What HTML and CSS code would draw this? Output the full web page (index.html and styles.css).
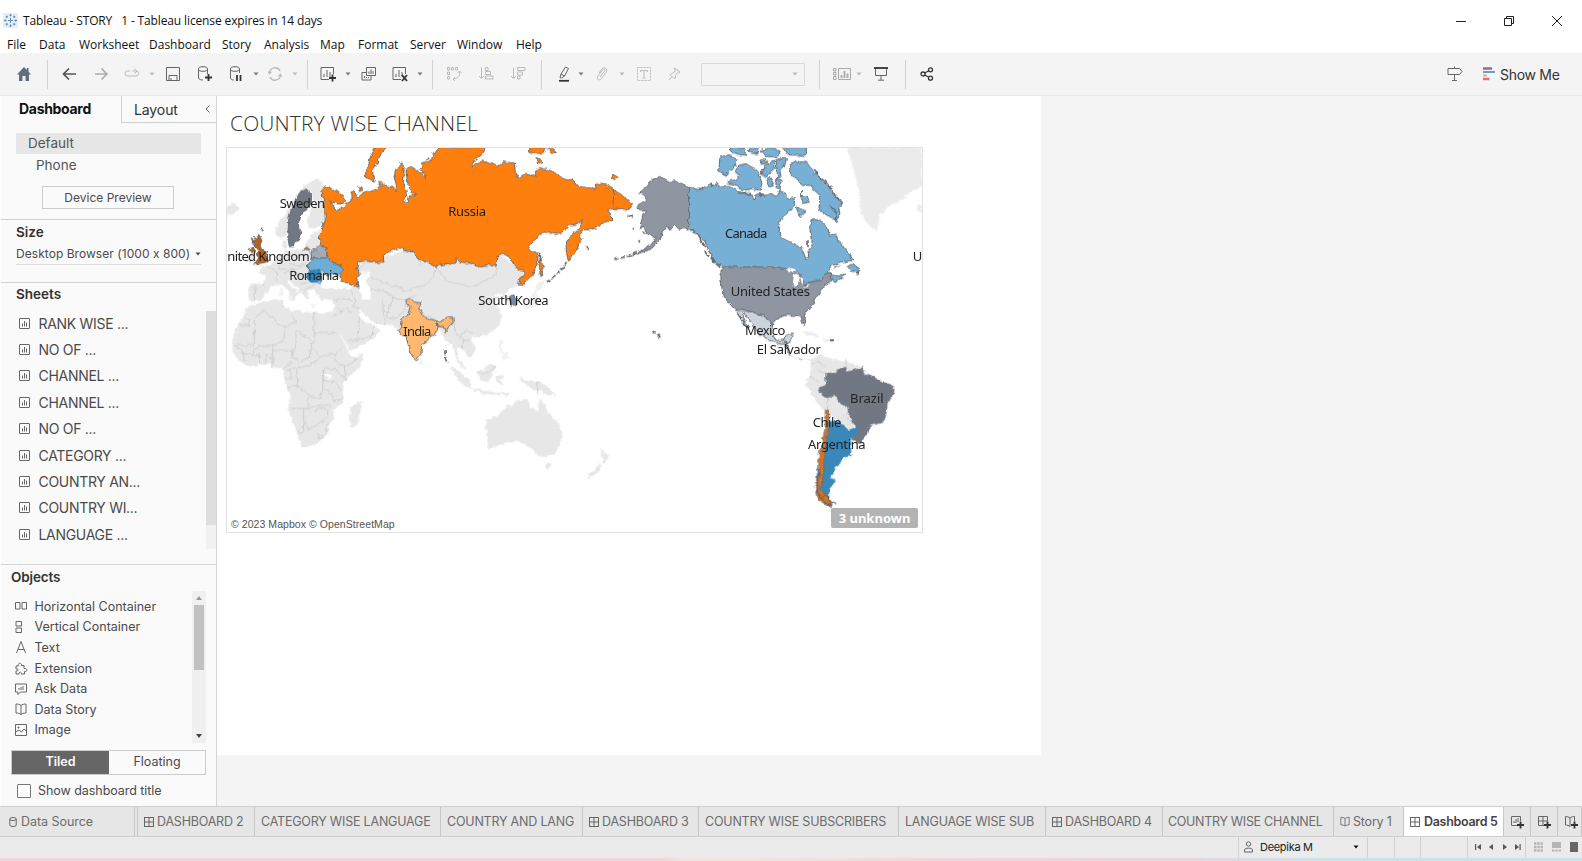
FILE: index.html
```html
<!DOCTYPE html>
<html lang="en">
<head>
<meta charset="utf-8">
<title>Tableau - STORY 1</title>
<link rel="stylesheet" href="styles.css">
</head>
<body>
<svg class="defs" width="0" height="0" aria-hidden="true">
  <symbol id="caret" viewBox="0 0 6 4"><path d="M.5 .5H5.5L3 3.5Z" fill="currentColor"/></symbol>
  <symbol id="sheet" viewBox="0 0 11 11"><rect x=".5" y=".5" width="10" height="10" rx=".5"/><path d="M3.5 8.500V5.500M5.500 8.500V3M7.500 8.500V4.500"/></symbol>
  <symbol id="dash" viewBox="0 0 10 10"><rect x=".5" y=".5" width="9" height="9"/><path d="M5 .5V9.500M.5 5H9.500"/></symbol>
  <symbol id="book" viewBox="0 0 12 12"><path d="M6 2.500C5 1.500 3 1 1 1V10C3 10 5 10.500 6 11.500C7 10.500 9 10 11 10V1C9 1 7 1.500 6 2.500V11.500"/></symbol>
</svg>
<div class="app">
  <header class="titlebar">
    <svg class="logo" width="15" height="15" viewBox="0 0 15 15"><path d="M0 0H15V15H0Z" fill="#e9eef2"/><path d="M7.500 5V10M5 7.500H10M7.500 1V3.500M6.300 2.200H8.700M7.500 11.500V14M6.300 12.800H8.700M1 7.500H3.500M2.200 6.300V8.700M11.500 7.500H14M12.800 6.300V8.700M3.800 2.500V5M2.600 3.800H5M11.200 2.500V5M10 3.800H12.400M3.800 10V12.500M2.600 11.200H5M11.200 10V12.500M10 11.200H12.400" stroke="#5b93b8"/></svg>
    <span class="apptitle">Tableau - STORY &nbsp; 1 - Tableau license expires in 14 days</span>
    <svg class="winbtn" width="10" height="10" viewBox="0 0 10 10"><path d="M0 5.500H10"/></svg>
    <svg class="winbtn" width="10" height="10" viewBox="0 0 10 10"><path d="M.5 2.500H7.500V9.500H.5ZM2.500 2.500V.5H9.500V7.500H7.500"/></svg>
    <svg class="winbtn" width="10" height="10" viewBox="0 0 10 10"><path d="M0 0L10 10M10 0L0 10"/></svg>
  </header>
  <nav class="menubar"><span class="me1">File</span><span class="me2">Data</span><span class="me3">Worksheet</span><span class="me4">Dashboard</span><span class="me5">Story</span><span class="me6">Analysis</span><span class="me7">Map</span><span class="me8">Format</span><span class="me9">Server</span><span class="me10">Window</span><span>Help</span></nav>
  <div class="toolbar">
    <svg class="m16" width="16" height="16" viewBox="0 0 16 16"><path d="M8 1L1 8.500H3V15H6.500V10H9.500V15H13V8.500H15L12.500 5.800V2H10.800V4Z" fill="#5f6e80"/></svg>
    <i class="sep m15"></i>
    <svg class="m14 st b2" width="15" height="14" viewBox="0 0 15 14"><path d="M14 7H1.500M7 1.500L1.500 7L7 12.500"/></svg>
    <svg class="m17 st dim b3" width="15" height="14" viewBox="0 0 15 14"><path d="M1 7H13M7.500 1.500L13 7L7.500 12.500"/></svg>
    <svg class="m15 st dim" width="16" height="14" viewBox="0 0 16 14"><path d="M6 4H3.500Q1 4 1 6.500T3.500 9H12Q14.500 9 14.500 6.500T12 4H8.500M10.500 1.500L13 4L10.500 6.500"/></svg>
    <svg class="m9 dim" width="6" height="4"><use href="#caret"/></svg>
    <svg class="m11 st" width="14" height="14" viewBox="0 0 14 14"><path d="M.5 .5H13.500V13.500H.5ZM3 13.500V8.500H11V13.500M5 13V11"/></svg>
    <svg class="m18 st" width="14" height="16" viewBox="0 0 14 16"><ellipse cx="5" cy="3" rx="4.500" ry="2.300"/><path d="M.5 3V12C1 13.500 3 14 5 14M9.500 3V8"/><path d="M7 11.500H14M10.500 8V15" class="bold"/></svg>
    <svg class="m18 st" width="14" height="16" viewBox="0 0 14 16"><ellipse cx="5" cy="3" rx="4.500" ry="2.300"/><path d="M.5 3V12C1 13.500 2 14 4 14M9.500 3V7"/><path d="M7 9V15M10.500 9V15" class="bold"/></svg>
    <svg class="m9" width="6" height="4"><use href="#caret"/></svg>
    <svg class="m9 st dim b4" width="14" height="14" viewBox="0 0 14 14"><path d="M1.500 6C2 0 10 -1 12 4M12.500 8C12 14 4 15 2 10M0 4.500L1.500 6.500L3.500 5M10.500 9L12.500 7.500L14 9.500"/></svg>
    <svg class="m10 dim" width="6" height="4"><use href="#caret"/></svg>
    <i class="sep m9"></i>
    <svg class="m12 st" width="17" height="16" viewBox="0 0 17 16"><path d="M9 13.500H1V1.500H13.500V8M4 11V8M7 11V4M10 11V6"/><path d="M9 12H16M12.500 8.500V15.500" class="bold"/></svg>
    <svg class="m8" width="6" height="4"><use href="#caret"/></svg>
    <svg class="m10 st" width="16" height="16" viewBox="0 0 16 16"><path d="M5.500 9.500H14.500V1.500H5.500ZM8 8V5.500M10 8V3.500M12 8V5M10 9.500V14H1V6.500H5.500M3.500 12V10M5.500 12V11M7.500 12V11"/></svg>
    <svg class="m15 st" width="17" height="16" viewBox="0 0 17 16"><path d="M9 13.500H1V1.500H13.500V8M4 11V8M7 11V4M10 11V6"/><path d="M10 9L15 15M15 9L10 15" class="bold"/></svg>
    <svg class="m8" width="6" height="4"><use href="#caret"/></svg>
    <i class="sep m9"></i>
    <svg class="m13 st dim" width="16" height="16" viewBox="0 0 16 16"><path d="M1.500 1.500H3.500V4H1.500ZM5.500 1.500H7.500V4H5.500ZM9.500 1.500H11.500V4H9.500ZM1.500 6H3.500V8.500H1.500ZM1.500 10.500H3.500V13H1.500ZM13.500 5.500C14.500 10 12 12.500 7 13M11.500 7L13.500 5L15.500 7M9 11L7 13L9 15"/></svg>
    <svg class="m16b st dim" width="16" height="16" viewBox="0 0 16 16"><path d="M3.500 1.500V12.500M1 10L3.500 12.500L6 10M7.500 1.500H10V4.500H7.500ZM7.500 5.500H12.500V8.500H7.500ZM7.500 10H15V13H7.500Z"/></svg>
    <svg class="m16b st dim" width="16" height="16" viewBox="0 0 16 16"><path d="M3.500 1.500V12.500M1 10L3.500 12.500L6 10M7.500 1.500H15V4.500H7.500ZM7.500 6H12.500V9H7.500ZM7.500 10H10V13H7.500Z"/></svg>
    <i class="sep m15"></i>
    <svg class="m16b st" width="12" height="16" viewBox="0 0 12 16"><path d="M2 11.500L3 8L7.500 1L10.500 2.500L6.500 10L3.500 12ZM3 8L6.500 10"/><path d="M1 14.800H11" class="bold"/></svg>
    <svg class="m8" width="6" height="4"><use href="#caret"/></svg>
    <svg class="m12 st dim" width="12" height="14" viewBox="0 0 12 14"><path d="M4 10L8.500 4C9.500 2.500 7.500 1.500 6.500 3L2 9C0 12 3 14.500 5.500 11.500L10 5.500C12.500 2 8.500 -1 6 2L3 6"/></svg>
    <svg class="m11 dim" width="6" height="4"><use href="#caret"/></svg>
    <svg class="m12 st dim" width="14" height="14" viewBox="0 0 14 14"><path d="M.5 .5H13.500V13.500H.5Z" stroke-dasharray="2 1"/><path d="M3.500 5V3.500H10.500V5M7 3.500V11M5.500 11H8.500"/></svg>
    <svg class="m17 st dim" width="13" height="14" viewBox="0 0 13 14"><path d="M6.500 1L12 5L10.500 6L9.500 5.800L7.500 8.500V11L6 11.500L2 7.500L3 6.500L5.500 6L7.300 3.500ZM4 9.500L1 13"/></svg>
    <div class="picker m20"><svg class="dim" width="6" height="4"><use href="#caret"/></svg></div>
    <i class="sep m14"></i>
    <svg class="m13 st mid" width="18" height="14" viewBox="0 0 18 14"><path d="M5.500 1.500H17.500V12.500H5.500ZM.5 1.500H3V4H.5ZM.5 5.500H3V8H.5ZM.5 9.500H3V12.500H.5Z"/><path d="M8.500 11V8M11.500 11V4M14.500 11V6.500" stroke-width="1.800"/></svg>
    <svg class="m5 dim" width="6" height="4"><use href="#caret"/></svg>
    <svg class="m11 st" width="16" height="16" viewBox="0 0 16 16"><path d="M2.500 2V9.500H13.500V2M8 9.500V14M5 14.200H11"/><path d="M1 2H15" class="bold"/></svg>
    <i class="sep m16b"></i>
    <svg class="m14 st dark" width="14" height="14" viewBox="0 0 14 14"><circle cx="3" cy="7" r="2"/><circle cx="10.500" cy="2.800" r="2"/><circle cx="10.500" cy="11.200" r="2"/><path d="M4.800 6L8.700 3.800M4.800 8L8.700 10.200"/></svg>
    <svg class="guide st" width="16" height="16" viewBox="0 0 16 16"><path d="M1 2.500H12.500L15 5.500L12.500 8.500H1ZM7.500 .5V2.500M7.500 8.500V14M5 14.500H10"/></svg>
    <svg class="m20" width="12" height="14" viewBox="0 0 12 14"><path d="M0 1.500H9" stroke="#8a6d98" stroke-width="2.500"/><path d="M0 5H12" stroke="#6d9dc8" stroke-width="2"/><path d="M0 8.500H4" stroke="#f0a48c" stroke-width="2"/><path d="M0 12H6.500" stroke="#e96f76" stroke-width="2.500"/></svg>
    <span class="showme">Show Me</span>
  </div>

  <div class="workspace">
    <aside class="side">
      <div class="sidetabs"><b>Dashboard</b><div class="layouttab"><span>Layout</span><svg class="st" width="5" height="8" viewBox="0 0 5 8"><path d="M4.500 .5L1 4L4.500 7.500"/></svg></div></div>
      <div class="devices">
        <div class="default">Default</div>
        <div class="phone">Phone</div>
        <div class="preview">Device Preview</div>
      </div>
      <div class="size"><h3>Size</h3><div class="sizepick"><span>Desktop Browser (1000 x 800)</span><svg width="6" height="4"><use href="#caret"/></svg></div></div>
      <div class="sheets">
        <div class="sheetcol">
          <h3>Sheets</h3>
          <ul>
            <li><svg class="st" width="11" height="11"><use href="#sheet"/></svg>RANK WISE ...</li>
            <li><svg class="st" width="11" height="11"><use href="#sheet"/></svg>NO OF ...</li>
            <li><svg class="st" width="11" height="11"><use href="#sheet"/></svg>CHANNEL ...</li>
            <li><svg class="st" width="11" height="11"><use href="#sheet"/></svg>CHANNEL ...</li>
            <li><svg class="st" width="11" height="11"><use href="#sheet"/></svg>NO OF ...</li>
            <li><svg class="st" width="11" height="11"><use href="#sheet"/></svg>CATEGORY ...</li>
            <li><svg class="st" width="11" height="11"><use href="#sheet"/></svg>COUNTRY AN...</li>
            <li><svg class="st" width="11" height="11"><use href="#sheet"/></svg>COUNTRY WI...</li>
            <li><svg class="st" width="11" height="11"><use href="#sheet"/></svg>LANGUAGE ...</li>
          </ul>
        </div>
        <div class="scroll1"><div></div></div>
      </div>
      <div class="objects">
        <h3>Objects</h3>
        <div class="objrow">
          <ul>
            <li><svg class="st" width="12" height="12" viewBox="0 0 12 12"><path d="M.5 2.500H5V9H.5ZM7 2.500H11.500V9H7Z"/></svg>Horizontal Container</li>
            <li><svg class="st" width="12" height="14" viewBox="0 0 12 14"><path d="M1 1.500H6.500V6H1ZM1 8H6.500V12.500H1Z"/></svg>Vertical Container</li>
            <li><svg class="st" width="12" height="14" viewBox="0 0 12 14"><path d="M1.500 13L6 1.500L10.500 13M3 9.500H9"/></svg>Text</li>
            <li><svg class="st" width="13" height="13" viewBox="0 0 13 13"><path d="M1 4H3.500C2 1 7 0 6.500 3.500H9V6.500C12.500 6 13 10 9.500 9.500V12H6.500C6.500 9.500 4 9.500 4 12H1V9C4 9 4 6.500 1 7Z"/></svg>Extension</li>
            <li><svg class="st" width="12" height="12" viewBox="0 0 12 12"><path d="M.5 1H11.500V9H5.500L3 11.500V9H.5ZM4 7V5M6 7V4M8 7V3"/></svg>Ask Data</li>
            <li><svg class="st" width="12" height="12"><use href="#book"/></svg>Data Story</li>
            <li><svg class="st" width="12" height="12" viewBox="0 0 12 12"><path d="M.5 .5H11.500V11.500H.5ZM.5 8L4 6L6.500 8L9 5L11.500 7M3 3H4V4H3Z"/></svg>Image</li>
          </ul>
          <div class="scroll2"><svg width="6" height="4" viewBox="0 0 6 4"><path d="M0 4H6L3 0Z" fill="#999"/></svg><div></div><svg width="6" height="4" viewBox="0 0 6 4"><path d="M0 0H6L3 4Z" fill="#444"/></svg></div>
        </div>
        <div class="segment"><b>Tiled</b><span>Floating</span></div>
        <label class="check"><i></i>Show dashboard title</label>
      </div>
    </aside>

    <main class="canvas">
      <h1>COUNTRY WISE CHANNEL</h1>
      <div class="mapframe">
        <svg width="695" height="384" viewBox="23 23 2085 1152">
          <defs>
            <filter id="coast" filterUnits="userSpaceOnUse" x="0" y="0" width="2130" height="1200" color-interpolation-filters="sRGB">
              <feTurbulence type="fractalNoise" baseFrequency=".07" numOctaves="2" seed="4" result="n"/>
              <feDisplacementMap in="SourceGraphic" in2="n" scale="14" xChannelSelector="R" yChannelSelector="G" result="d"/>
              <feGaussianBlur in="d" stdDeviation="1"/>
            </filter>
          </defs>
          <g filter="url(#coast)">
          <!-- base land -->
          <g class="land">
            <path d="M128 384L120 376 148 376 168 365 185 345 192 328 215 332 250 328 262 320 300 330 400 380 560 330 620 360 800 360 840 340 915 400 918 412 900 428 888 438 870 446 855 462 880 475 888 492 875 500 862 480 848 462 832 456 820 465 838 470 826 484 832 496 842 515 845 535 838 555 820 572 800 585 775 588 760 585 755 600 768 620 766 640 752 652 738 638 722 620 712 625 715 650 728 668 740 688 728 680 712 655 706 630 700 610 690 612 672 590 668 575 660 560 650 580 605 620 606 645 590 660 580 650 568 620 558 585 545 580 535 570 525 556 500 552 470 548 455 540 432 520 418 505 420 530 440 548 458 550 466 558 482 572 465 590 440 605 415 622 392 630 388 620 372 590 352 560 340 540 335 528 345 500 340 480 310 478 296 465 285 445 264 450 270 478 250 462 232 440 205 418 200 422 215 440 244 458 230 466 222 480 212 456 188 430 170 432 150 440 140 460 125 478 95 482 88 470 90 430 130 432 138 410 118 395Z"/>
            <path d="M168 278L172 262 182 240 205 215 215 190 232 165 250 140 280 122 300 118 312 135 302 150 278 150 260 146 240 170 218 205 208 250 208 272 195 290 178 290Z"/>
            <path d="M278 150L302 148 316 178 318 240 308 252 290 262 270 262 262 245 276 210 292 190 280 175ZM275 285L300 268 302 312 278 330 256 318 266 300ZM188 302H202V324H190ZM22 200L45 188 60 205 45 220 22 226ZM90 336L106 338 102 362 86 364Z"/>
            <path d="M208 465L225 470 222 480 208 476ZM183 445H190V466H182ZM270 492L290 496 282 500ZM952 430L975 420 965 445 948 455 960 480 945 500 915 505 905 500 930 490 940 470ZM838 600L848 600 846 625 856 640 848 640 838 622ZM850 645L865 635 868 655 852 660ZM600 655L612 660 608 672 600 670Z" opacity=".6"/>
          </g>
          <g class="land" transform="translate(0 450)">
            <path d="M40 183L40 140 55 105 72 85 78 60 92 48 115 40 150 32 185 28 192 50 215 62 240 58 255 70 262 64 300 70 335 68 345 90 358 120 372 152 388 185 400 205 430 190 432 205 410 240 385 262 372 275 370 310 372 335 340 360 345 385 330 400 325 425 300 455 275 468 250 470 240 450 235 428 215 380 207 355 215 320 205 290 192 262 192 235 165 230 150 220 120 220 95 230 60 212Z"/>
            <path d="M395 352L425 332 428 345 410 405 398 410 390 395ZM800 390L838 375 860 350 880 345 895 330 925 330 930 350 955 365 962 325 975 345 985 365 1010 390 1028 430 1020 465 1005 490 980 500 955 495 940 475 925 465 890 450 850 460 812 474 805 465 808 440 800 415ZM978 520L996 518 990 536 982 536ZM1145 475L1155 490 1170 495 1162 510 1150 520 1150 505ZM1145 518L1145 530 1125 555 1108 563 1106 552 1130 535Z"/>
            <path d="M900 262L930 275 955 270 980 285 1010 315 990 312 965 302 940 300 925 282 905 275ZM772 245L795 235 815 222 828 232 818 255 805 275 785 270ZM690 228L720 245 750 270 752 292 735 285 712 258ZM752 294L790 300 830 308 870 310 860 316 790 308ZM828 255L852 258 840 268 852 285 835 275Z"/>
          </g>
          <g class="land"><path d="M1885 22L2108 22 2108 140 2080 150 2050 175 2010 195 1980 225 1972 270 1955 262 1935 240 1922 200 1920 150 1910 110 1895 60ZM2095 190L2108 195V220L2098 212ZM1750 572L1780 578 1800 590 1770 585ZM1810 594L1840 596 1835 604 1815 602Z" opacity=".8"/>
            <path d="M1690 615L1712 622 1708 640 1730 655 1775 658 1800 645 1850 660 1880 665 1932 680 1930 720 1900 740 1900 870 1908 895 1900 915 1885 905 1880 860 1822 815 1800 795 1775 755 1757 735 1775 710 1775 670 1760 655 1740 660 1715 645Z"/>
          </g>
          <!-- inland water -->
          <g fill="#fff"><path d="M300 430L310 418 318 400 330 415 345 405 360 418 385 430 400 442 370 446 330 445 305 445ZM428 398L450 396 452 410 440 420 448 440 455 460 452 478 430 478 422 455 418 435 412 415ZM316 702L334 700 338 715 318 712Z"/></g>
          <!-- borders -->
          <g class="border">
            <path d="M415 385L440 365 490 365M455 410L490 425 510 435 540 440 560 455 590 440 620 435 640 410 650 378M455 445L490 450 520 470 550 480 590 465M490 475L492 520 500 552M395 452L410 480 400 500 420 508M345 480L370 478 400 480M520 470L515 490 500 530 530 535 555 510 560 480M340 530L380 505 400 515M352 500L370 515M420 530L415 605M466 558L455 590 388 602M130 432L138 438M92 440L110 435 105 482M148 380L175 395 172 425M185 345L178 385 230 388 262 370M210 370L240 375 270 372M192 398L225 390 225 410M230 405L262 412M240 430L262 426M250 460L262 445 290 430M595 505L620 525 655 540M650 380L680 420 750 440 790 425 830 405 832 376M700 545L705 575 720 590 750 605M720 590L740 570 760 580M735 595L725 620M600 350L605 375M650 378L700 372"/>
            <path transform="translate(0 450)" d="M72 85H92V105H60M132 60L105 85 105 165H45M132 60L195 112 230 95 218 75M192 50L190 30M284 65V155L230 120M284 128H352M195 112L195 145 170 165 130 165 105 175 100 195 60 185M45 165L70 185 75 210M100 195L120 192 125 220M140 190V218M155 188V220M160 165L160 230M160 180L220 180 215 215 195 235M230 120L230 160 220 200 240 215 270 200 275 155M284 155L275 165 300 200 350 190 370 170M300 205L280 220 225 235 200 240M350 190L345 210 375 230 415 210 400 200M375 230L378 265M315 235L345 235 378 265M315 235L310 270 345 275 370 300M232 235L235 285 265 310 300 330 310 295 312 240M205 290L235 285M265 310L267 355H210M310 295L335 310 345 335 372 322M267 355L300 345 335 345M253 355V425H235M258 385L265 420 300 400 325 380 325 360 300 350 285 365M325 400L320 425 332 415M295 440A7 7 0 1 0 309 436 7 7 0 1 0 295 440M955 270V312M772 245L800 248 828 232M195 265H215V235"/>
            <path d="M1775 670L1800 665 1815 680M1757 720L1775 710 1800 725M1825 770V815M1820 700L1800 690M1880 655V690M1870 820L1900 850"/>
          </g>
          <!-- filled countries -->
          <g class="filled">
            <path fill="#ff7f0e" d="M306 148L318 137 334 143 356 155 372 168 379 182 370 191 352 190 334 184 344 200 350 212 366 206 374 200 376 194 388 186 398 178 398 162 394 156 404 152 408 166 416 172 428 160 444 150 458 152 464 146 474 150 486 138 478 126 490 128 506 138 524 142 532 152 530 130 524 108 530 86 546 68 554 78 554 100 552 125 560 150 562 172 550 186 566 184 572 164 592 166 574 152 568 130 562 112 560 90 572 76 590 88 612 104 620 116 616 102 604 86 606 68 636 62 640 50 658 22 798 20 790 40 765 58 755 80 772 68 790 62 805 68 840 75 855 65 885 68 888 95 900 115 915 102 945 105 950 92 960 82 1000 92 1025 112 1040 118 1062 118 1068 135 1090 140 1130 145 1128 132 1160 132 1182 148 1210 165 1222 180 1240 190 1228 205 1222 212 1205 205 1182 205 1165 210 1175 222 1178 240 1150 248 1135 262 1110 268 1092 268 1080 280 1088 295 1078 310 1075 325 1060 345 1047 362 1042 340 1040 315 1048 292 1070 275 1080 262 1092 240 1078 245 1070 255 1050 252 1035 272 1010 282 990 278 962 280 945 300 928 322 940 335 955 335 956 360 950 385 935 410 915 432 898 432 902 412 918 400 912 390 898 388 885 375 870 350 855 342 840 342 834 360 830 375 805 373 780 378 760 370 725 365 710 355 705 372 680 370 648 378 620 362 600 360 590 345 575 330 556 332 540 322 520 330 500 338 492 348 494 365 470 366 440 362 415 365 412 385 420 400 412 412 416 440 405 436 385 428 365 420 362 405 370 390 368 376 350 372 332 358 325 345 318 322 303 312 300 290 308 265 318 240 316 205 312 175Z"/>
            <path fill="#ff7f0e" d="M470 20L452 52 448 76 438 98 440 112 455 118 468 122 462 104 458 92 472 70 478 50 500 20ZM418 142L428 140 430 150 420 154ZM932 20L930 34 950 40 975 36 980 22ZM985 26L1000 24 1012 34 1000 40ZM950 52L962 55 970 68 955 72ZM1175 110L1185 102 1197 110 1185 118ZM1182 148V205M960 332L966 355 968 370 976 382 968 385 970 405 962 404ZM252 328L262 320 272 328Z"/>
            <path fill="#717884" d="M245 152L262 146 276 162 276 190 262 205 245 225 238 248 238 265 248 275 240 300 225 305 222 320 210 318 205 290 207 260 208 235 215 210 228 180Z"/>
            <path fill="#a4aab5" d="M290 325L300 315 318 322 326 345 318 356 276 354 275 332Z"/>
            <path fill="#6caed6" d="M275 355L325 352 348 372 368 376 370 390 355 405 340 400 325 408 312 395 300 388 285 390 266 392 268 372Z"/>
            <path fill="#3182b4" stroke="#3182b4" d="M270 392L285 390 300 392 306 408 302 425 275 426 260 412Z"/>
            <path fill="#b8601f" d="M105 300L118 285 128 300 122 315 135 335 146 352 142 365 118 370 106 372 118 352 110 342 118 330 108 318ZM90 326L102 322 106 334 96 336Z"/>
            <path fill="none" class="isles" d="M96 292L104 306 98 310M106 288L110 300M128 272L132 262M636 40L644 38M620 58L630 54"/>
            <path fill="#ffb86e" d="M558 480L575 475 585 485 606 488 598 505 608 522 628 536 648 540 660 545 685 530 700 530 702 545 690 560 678 578 672 558 658 556 652 545 656 560 650 580 628 596 606 616 605 640 590 661 580 650 568 620 560 590 545 584 535 570 548 562 544 540 565 525 572 500Z"/>
            <path fill="none" class="isles" d="M677 628V642M676 648L682 668"/>
            <path fill="#6d8daa" d="M870 470L882 462 892 478 888 492 876 498Z"/>
            <path fill="none" class="isles" stroke-dasharray="14 5" d="M982 425Q1020 400 1042 365M1185 357Q1230 350 1300 315M1227 227L1242 230M1098 318L1110 328M1240 264L1244 266M1258 300L1262 306M1298 575L1306 578M1314 580L1326 594"/>
          </g>
          <g class="filled" transform="translate(1230 0)">
            <path fill="#8f96a1" d="M178 138L160 132 140 122 125 124 110 118 90 108 68 118 48 140 30 155 45 165 58 178 40 185 22 200 35 212 50 212 40 225 35 245 30 262 42 258 45 275 65 285 80 292 66 312 30 338 0 350 40 336 70 322 92 294 100 275 110 262 125 268 135 255 150 266 178 265Z"/>
            <path fill="#78afd4" d="M178 138L205 148 222 142 240 132 258 136 262 125 268 138 300 135 318 150 345 158 370 165 374 180 380 165 410 165 425 160 440 168 450 150 470 160 478 175 498 172 492 200 478 215 455 235 447 260 452 285 475 300 510 318 522 335 530 358 538 350 536 330 548 320 548 290 540 262 550 238 575 240 595 260 600 285 618 278 625 300 635 310 650 330 665 345 670 360 640 365 610 375 595 395 606 398 600 412 570 425 545 424 525 432 515 405 500 392 470 385 440 380 285 380 262 370 245 345 225 300 205 280 178 265Z"/>
            <path fill="#78afd4" d="M272 50L300 43 325 60 312 85 290 105 268 92ZM325 75L350 70 375 85 388 95 398 130 392 150 370 145 345 150 320 135 292 125 318 118 332 108 318 95ZM392 60L408 55 412 68 396 72ZM405 75L435 60 438 85 425 95 412 110 395 100ZM440 58L472 52 465 80 452 90 455 110 445 115ZM412 120L425 112 432 135 420 140ZM440 115L455 120 452 150 440 140ZM480 75L500 60 512 68 530 65 550 85 552 98 575 110 590 135 608 145 612 165 640 185 628 205 632 220 622 242 600 228 582 220 565 205 575 190 572 165 555 150 545 135 515 135 505 115 485 105ZM512 175L530 165 540 185 520 190ZM500 200L530 212 510 230ZM302 22L345 22 350 45 330 42 308 36ZM355 22L390 22 385 42 365 38ZM395 30L430 22 450 32 445 50 410 48ZM460 22L535 20 530 45 475 44ZM655 380L668 372 685 378 690 400 665 392ZM605 405L650 402 622 424 610 420ZM615 380L635 378 630 390Z"/>
            <path fill="#fff" stroke="none" d="M612 384L640 375 660 362 655 378 636 398 612 398 600 395Z"/>
            <path fill="#8f96a1" d="M285 380L445 380 470 388 495 396 515 405 522 434 545 426 575 418 590 400 605 398 606 420 582 443 562 470 552 490 530 512 525 525 530 550 525 556 514 530 495 525 470 525 440 535 430 552 420 545 400 525 385 525 370 515 318 508 300 490 285 470 275 430 275 390Z"/>
            <path fill="#fff" stroke="none" d="M468 388L485 383 500 388 495 395 480 396ZM494 402L505 400 512 410 505 435 496 440 490 430ZM512 410L522 418 520 434ZM519 440L542 430 540 436 525 442Z"/>
            <path fill="#cbd3dd" d="M318 508L370 515 400 527 430 550 428 575 440 600 465 600 470 585 492 578 490 592 475 612 455 612 420 600 390 580 370 555 345 520 342 530 360 568 345 555 330 525Z"/>
            <path fill="none" class="isles" d="M184 270L205 282 218 305 228 318M230 330L236 348M244 345L258 368 272 380M210 290L226 320M205 145L222 146M244 130L250 140M585 120L606 146M610 158L636 186M600 196L622 218M622 222L618 238M325 160L365 160M385 160L410 168M603 598L615 601M466 605L478 630M555 90L580 122M518 150V172M536 300V320M682 392L690 400M322 515L350 558"/>
          </g>
          <g class="filled" transform="translate(1560 570)">
            <path fill="#717884" stroke="#717884" d="M260 128L290 130 295 118 318 110 325 125 370 112 380 135 400 140 430 155 462 168 464 185 445 215 438 260 425 278 390 285 382 310 362 340 330 322 350 300 345 280 330 260 325 230 300 215 290 195 260 202 240 188 240 172 260 165Z"/>
            <path fill="#3a88b9" stroke="#3a88b9" d="M268 275L300 272 328 300 355 290 355 305 332 325 335 350 333 375 305 385 300 405 290 410 275 440 285 455 270 475 268 500 245 495 240 460 245 420 258 360 265 310Z"/>
            <path fill="#e07318" d="M258 240L268 240 268 290 262 330 255 370 252 420 250 450 240 475 268 500 275 528 250 520 232 500 228 465 238 420 240 370 248 340 258 290Z"/>
            <path fill="none" class="isles" stroke-width="8" d="M236 415L242 440M236 430L232 465 236 490 252 510 274 526M262 495L275 516 290 520M250 485L255 502"/>
            <path fill="none" d="M275 30H286M182 86L186 92M146 60L152 80"/>
          </g>
          </g>
          <g class="labels">
            <text x="181" y="203" textLength="136">Sweden</text>
            <text x="687" y="226" textLength="113">Russia</text>
            <text x="24" y="362" textLength="247">nited Kingdom</text>
            <text x="210" y="419" textLength="149">Romania</text>
            <text x="777" y="494" textLength="211">South Korea</text>
            <text x="552" y="586" textLength="84">India</text>
            <text x="1517" y="292" textLength="127">Canada</text>
            <text x="1534" y="467" textLength="238">United States</text>
            <text x="1577" y="584" textLength="121">Mexico</text>
            <text x="1612" y="641" textLength="193">El Salvador</text>
            <text x="1892" y="789" textLength="101">Brazil</text>
            <text x="1780" y="861" textLength="86">Chile</text>
            <text x="1766" y="925" textLength="173">Argentina</text>
            <text x="2080" y="363" textLength="25">U</text>
          </g>
        </svg>
        <span class="credit">© 2023 Mapbox © OpenStreetMap</span>
        <span class="unknown">3 unknown</span>
      </div>
    </main>
  </div>

  <footer>
    <div class="tabs">
      <div class="ds"><svg class="st" width="8" height="10" viewBox="0 0 8 10"><path d="M.8 2V8C1 10 7 10 7.200 8V2C7 0 1 0 .8 2C1 4 7 4 7.200 2"/></svg>Data Source</div>
      <div class="gap"></div>
      <div><svg class="st" width="10" height="10"><use href="#dash"/></svg>DASHBOARD 2</div>
      <div>CATEGORY WISE LANGUAGE</div>
      <div>COUNTRY AND LANG</div>
      <div><svg class="st" width="10" height="10"><use href="#dash"/></svg>DASHBOARD 3</div>
      <div>COUNTRY WISE SUBSCRIBERS</div>
      <div>LANGUAGE WISE SUB</div>
      <div><svg class="st" width="10" height="10"><use href="#dash"/></svg>DASHBOARD 4</div>
      <div class="cwc">COUNTRY WISE CHANNEL</div>
      <div><svg class="st" width="10" height="11"><use href="#book"/></svg>Story 1</div>
      <div class="active"><svg class="st" width="10" height="10"><use href="#dash"/></svg>Dashboard 5</div>
      <div class="new"><svg class="st" width="14" height="14" viewBox="0 0 14 14"><path d="M7 10.500H1.500V1.500H10.500V6M4 8V6M6 8V4M8 7V3"/><path d="M7 10H14M10.500 6.500V13.500" class="bold"/></svg></div>
      <div class="new"><svg class="st" width="14" height="14" viewBox="0 0 14 14"><path d="M7 10.500H1.500V1.500H10.500V6M6 1.500V10.500M1.500 6H10.500"/><path d="M7 10H14M10.500 6.500V13.500" class="bold"/></svg></div>
      <div class="new"><svg class="st" width="14" height="14" viewBox="0 0 14 14"><path d="M6 3C5 2 3 1.500 1.500 1.500V10C3 10 5 10.500 6 11.500V3C7 2 9 1.500 10.500 1.500V6"/><path d="M7 10H14M10.500 6.500V13.500" class="bold"/></svg></div>
    </div>
    <div class="status">
      <div></div>
      <div class="user"><svg class="st" width="9" height="12" viewBox="0 0 9 12"><circle cx="4.500" cy="3" r="2.200"/><path d="M.5 11V9C.5 6.500 8.500 6.500 8.500 9V11Z"/></svg><span>Deepika M</span><svg class="blk" width="6" height="4"><use href="#caret"/></svg></div>
      <div></div><div></div><div></div>
      <div class="pager"><svg width="46" height="8" viewBox="0 0 46 8" fill="#555"><path d="M0 1H1.200V7H0ZM6 1V7L2 4ZM18 1V7L14 4ZM28 1V7L32 4ZM40 1V7L44 4ZM44.500 1H45.700V7H44.500Z"/></svg></div>
      <div class="views"><svg width="45" height="10" viewBox="0 0 45 10"><path d="M0 1.500H9M0 5H9M0 8.500H9" stroke="#b5b5b5" stroke-width="2.500" stroke-dasharray="2.500 .8"/><path d="M18 0H27V6H18Z" fill="#b5b5b5"/><path d="M18 8.500H27" stroke="#b5b5b5" stroke-width="2" stroke-dasharray="2.500 .8"/><path d="M36 0H44V10H36Z" fill="#666"/></svg></div>
    </div>
    <div class="strip"></div>
  </footer>
</div>
</body>
</html>
```
FILE: styles.css
```css
* { box-sizing: border-box; }
body { margin: 0; background: #fff; font-family: Inter, "Liberation Sans", sans-serif; font-feature-settings: "calt" 0; color: #4a4a4a; }
ul, h1, h3 { margin: 0; padding: 0; list-style: none; }
svg { flex: none; display: block; }
.defs { position: absolute; }
.app { width: 1582px; height: 861px; display: flex; flex-direction: column; overflow: hidden; }
.st { fill: none; stroke: #666; stroke-width: 1; color: #666; }
.bold { stroke: #333; stroke-width: 1.8; }
.b2 { stroke-width: 1.7; stroke: #555; }
.dark { stroke: #333; stroke-width: 1.3; }
.dim { color: #bbb; }
.st.dim { stroke: #bbb; }
.st.b3 { stroke: #aaa; stroke-width: 1.5; }
.st.b4 { stroke-width: 1.3; }
.st.mid { stroke: #aaa; }

.titlebar { height: 33px; padding: 8px 20px 0 3px; display: flex; align-items: center; color: #111; }
.apptitle { font: 12px "Open Sans", sans-serif; margin-left: 5px; flex: 1; letter-spacing: -.13px; white-space: nowrap; }
.winbtn { margin-left: 38px; stroke: #222; fill: none; }
.menubar { height: 20px; padding: 2px 0 0 7px; display: flex; align-items: center; font: 12px "Open Sans", sans-serif; color: #111; white-space: nowrap; }
.menubar span { flex: none; }
.me1 { width: 32px; } .me2 { width: 40px; } .me3 { width: 70px; } .me4 { width: 73px; } .me5 { width: 42px; } .me6 { width: 56px; }
.me7 { width: 38px; } .me8 { width: 52px; } .me9 { width: 47px; } .me10 { width: 59px; }

.toolbar { height: 43px; background: #f4f4f4; display: flex; align-items: center; padding-right: 23px; color: #777; border-bottom: 1px solid #e8e8e8; }
.sep { width: 1px; height: 29px; background: #d2d2d2; flex: none; }
.m5 { margin-left: 5px; } .m8 { margin-left: 8px; } .m9 { margin-left: 9px; } .m10 { margin-left: 10px; } .m11 { margin-left: 11px; }
.m12 { margin-left: 12px; } .m13 { margin-left: 13px; } .m14 { margin-left: 14px; } .m15 { margin-left: 15px; }
.m16, .m16b { margin-left: 16px; } .m17 { margin-left: 17px; } .m18 { margin-left: 18px; } .m20 { margin-left: 20px; }
.picker { width: 104px; height: 23px; border: 1px solid #d8d8d8; border-radius: 1px; display: flex; align-items: center; justify-content: flex-end; padding-right: 6px; }
.guide { margin-left: auto; }
.showme { margin-left: 5px; font-size: 14px; letter-spacing: -.3px; color: #333; width: 59px; white-space: nowrap; }

.workspace { height: 710px; display: flex; background: #f4f4f4; }
.side { width: 217px; background: #fafafa; border-right: 1px solid #d4d4d4; border-left: 1px solid #fff; display: flex; flex-direction: column; }
.side h3 { font-size: 13.500px; font-weight: 600; line-height: 18px; color: #333; }
.sidetabs { height: 27px; display: flex; }
.sidetabs b { width: 120px; padding: 4px 0 0 18px; font-size: 14px; font-weight: 700; line-height: 18px; letter-spacing: -.3px; color: #111; }
.layouttab { flex: 1; border-left: 1px solid #d0d0d0; border-bottom: 1px solid #d0d0d0; display: flex; align-items: center; justify-content: space-between; padding: 0 6px 0 12px; font-size: 14px; letter-spacing: -.1px; color: #333; }
.devices { height: 97px; padding: 10px 15px 0; font-size: 13.500px; border-bottom: 1px solid #cfcfcf; }
.default { height: 21px; line-height: 20px; background: #e6e6e6; padding-left: 12px; color: #555; }
.phone { padding-left: 20px; line-height: 22px; height: 32px; color: #555; }
.preview { width: 132px; height: 23px; margin-left: 26px; border: 1px solid #cbcbcb; text-align: center; font-size: 12px; line-height: 21px; }
.size { height: 63px; padding: 3px 15px 0; border-bottom: 1px solid #d4d4d4; }
.sizepick { height: 24px; padding-top: 2px; border-bottom: 1px solid #ddd; display: flex; align-items: center; justify-content: space-between; font-size: 12px; letter-spacing: .05px; white-space: nowrap; }
.sheets { height: 282px; display: flex; border-bottom: 1px solid #d4d4d4; }
.sheetcol { flex: 1; padding: 2px 0 0 15px; }
.sheetcol ul { padding: 7px 0 0 3px; font-size: 14px; letter-spacing: -.3px; }
.sheetcol li { height: 26.400px; display: flex; align-items: center; gap: 8.500px; }
.scroll1 { width: 10px; height: 238px; margin-top: 28px; background: #f1f1f1; }
.scroll1 div { height: 214px; background: #dedede; }
.objects { flex: 1; padding: 3px 10px 0 10px; }
.side .objects h3 { letter-spacing: -.15px; }
.objrow { display: flex; justify-content: space-between; padding-top: 5px; height: 163px; }
.objrow ul { padding: 5px 0 0 4px; font-size: 12.500px; }
.objrow li { height: 20.600px; display: grid; grid-template-columns: 19.500px auto; align-items: center; white-space: nowrap; }
.scroll2 { width: 14px; height: 152px; background: #f0f0f0; display: flex; flex-direction: column; align-items: center; padding: 5px 0; }
.scroll2 div { width: 10px; height: 65px; background: #c1c1c1; margin: 5px 0 auto; }
.segment { height: 25px; display: flex; border: 1px solid #ccc; font-size: 12.500px; line-height: 22px; text-align: center; margin-top: 1px; }
.segment b { width: 97px; background: #666; color: #fff; font-weight: 600; }
.segment span { flex: 1; }
.check { display: flex; align-items: center; gap: 7px; padding: 8px 0 0 6px; font-size: 12.500px; letter-spacing: -.05px; white-space: nowrap; }
.check i { width: 14px; height: 14px; border: 1px solid #777; border-radius: 1px; background: #fff; }

.canvas { width: 824px; height: 659px; background: #fff; padding: 12px 0 0 9px; }
h1 { font: 300 21px "Open Sans", sans-serif; line-height: 31px; letter-spacing: .13px; color: #333; padding-left: 4px; white-space: nowrap; }
.mapframe { width: 697px; height: 386px; margin-top: 8px; border: 1px solid #e2e2e2; position: relative; overflow: hidden; }
.land { fill: #e7e7e7; stroke: #e7e7e7; stroke-width: 2; stroke-linejoin: round; }
.border { fill: none; stroke: #c2c2c2; stroke-width: 2; }
.filled { stroke: #666b72; stroke-width: 3; stroke-linejoin: round; }
.isles { stroke: #61666e; stroke-width: 5; }
.labels { font: 39px "Noto Sans", sans-serif; fill: #222; }
.credit { position: absolute; left: 4px; bottom: 1px; font: 10.500px/14px "Liberation Sans", sans-serif; letter-spacing: .06px; color: #555; white-space: nowrap; }
.unknown { position: absolute; right: 4px; bottom: 4px; width: 87px; height: 20px; border-radius: 2px; background: #b3b3b3; color: #fff; font: 700 13px/20px "Noto Sans", sans-serif; text-align: center; }

footer { height: 55px; background: #ebebeb; }
.tabs { height: 31px; display: grid; grid-template-columns: 135px 3px 117px 186px 142px 116px 200px 147px 117px 171px 70px 100px 27px 27px 24px; border-top: 1px solid #cfcfcf; border-bottom: 1px solid #cfcfcf; background: #e6e6e6; font-size: 12.500px; color: #6c6c6c; letter-spacing: -.2px; white-space: nowrap; }
.tabs > div { border-right: 1px solid #c8c8c8; padding-left: 6px; display: flex; align-items: center; gap: 3px; overflow: hidden; }
.tabs > .ds { padding-left: 9px; gap: 4px; letter-spacing: -.05px; }
.tabs > .gap { padding: 0; }
.tabs > .cwc { padding-left: 5px; letter-spacing: -.3px; }
.tabs > .active { background: #fff; font-weight: 600; color: #444; gap: 4px; letter-spacing: -.3px; }
.tabs > .new { padding-left: 6px; }
.status { height: 21px; display: grid; grid-template-columns: 1239px 129px 27px 26px 47px 58px 1fr; }
.status > div { border-right: 1px solid #d0d0d0; display: flex; align-items: center; padding-bottom: 2px; }
.status > .user { padding: 0 8px 2px 5px; gap: 7px; font-size: 11px; color: #222; }
.user span { flex: 1; letter-spacing: -.3px; }
.blk { color: #111; }
.status > .pager { padding-left: 7px; }
.status > .views { padding-left: 8px; border: 0; }
.strip { height: 3px; background: linear-gradient(90deg, #f0d6dd 0 42%, #f2e4dc 43% 47%, #f0d6dd 60%, #e8d4dc 75%, #c4e6e8 85%); }
```
